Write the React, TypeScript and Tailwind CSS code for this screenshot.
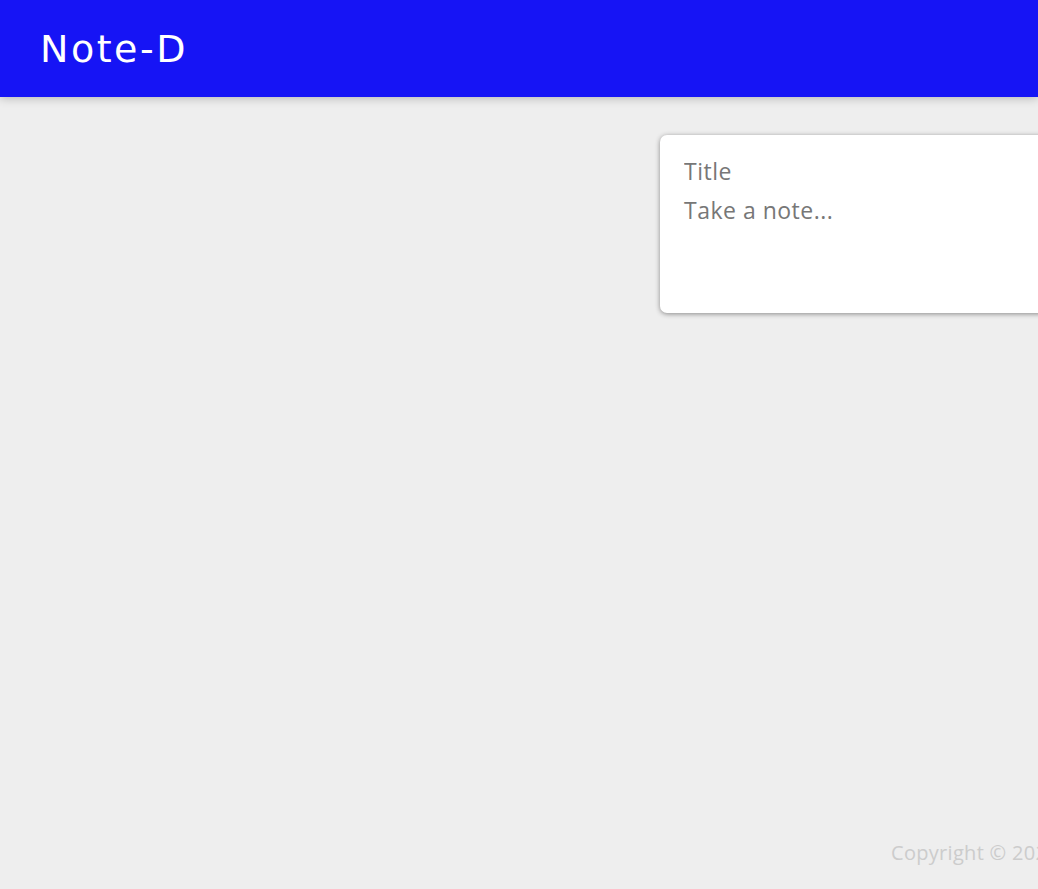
export default function App() {
  return (
    <div className="relative min-h-[889px] w-[1038px] overflow-hidden bg-[#eeeeee] font-['Open_Sans',sans-serif]">
      {/* Header */}
      <header className="h-[97px] bg-[#1614f5] px-[40px] flex items-center shadow-[0_0_10px_0_rgba(0,0,0,0.3)]">
        <h1 className="text-white text-[38px] font-normal tracking-[2.5px] font-['DejaVu_Sans',sans-serif] leading-none">
          Note-D
        </h1>
      </header>

      {/* Create note */}
      <div className="w-[1800px]">
        <form className="mx-auto mt-[38px] w-[480px] bg-white rounded-[7px] shadow-[0_1px_5px_rgb(138,137,137)] px-[20px] pt-[20px] pb-[20px] h-[178px]">
          <input
            name="title"
            placeholder="Title"
            className="block w-full px-[4px] text-[23px] tracking-[0.5px] leading-[32px] text-[#555] placeholder:text-[#777] outline-none border-none bg-transparent"
          />
          <textarea
            name="content"
            placeholder="Take a note..."
            rows={3}
            className="block w-full mt-[7px] px-[4px] text-[23px] tracking-[0.5px] leading-[32px] text-[#555] placeholder:text-[#777] outline-none border-none resize-none bg-transparent"
          />
        </form>
      </div>

      {/* Footer */}
      <footer className="absolute left-0 bottom-0 w-full h-[50px] pl-[891px]">
        <p className="text-[#cccccc] text-[20px] tracking-[0.3px] leading-[28px] whitespace-nowrap">Copyright © 2024</p>
      </footer>
    </div>
  );
}
